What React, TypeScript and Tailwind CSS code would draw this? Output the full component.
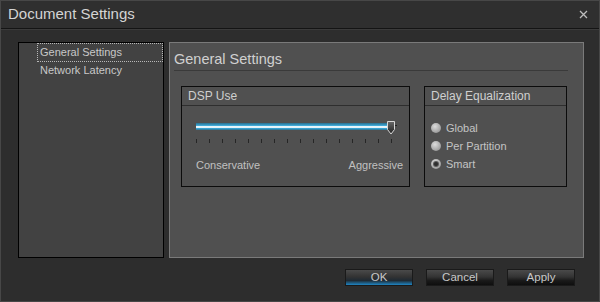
const font = { fontFamily: '"Liberation Sans", Arial, sans-serif' };

function Radio({ label, checked }: { label: string; checked?: boolean }) {
  return (
    <div className="flex h-[18px] items-center gap-[5px]">
      <span className="flex size-[10px] items-center justify-center rounded-full bg-[radial-gradient(circle_at_40%_35%,#dcdcdc,#a8a8a8_60%,#808080)]">
        {checked && <span className="size-[4px] rounded-full bg-[#2e2e2e] ring-1 ring-[#5a5a5a]" />}
      </span>
      <span className="text-[11px] leading-none text-[#c4c4c4]">{label}</span>
    </div>
  );
}

function GroupBox({ title, className, children }: { title: string; className: string; children: React.ReactNode }) {
  return (
    <div className={"flex flex-col border border-[#0c0c0c] " + className}>
      <div className="flex h-[19px] items-center border-b border-[#2e2e2e] pl-[6px] text-[12px] text-[#cfcfcf]">{title}</div>
      {children}
    </div>
  );
}

export default function App() {
  const ticks = Array.from({ length: 16 });
  return (
    <div className="flex h-[302px] w-[600px] flex-col border border-[#474747] bg-[#2d2d2d]" style={font}>
      <div className="flex h-[28px] shrink-0 items-center justify-between border-b border-[#141414] bg-[#2f2f2f] pl-[7px] pr-[11px]">
        <span className="text-[15px] text-[#d4d4d4]">Document Settings</span>
        <svg width="9" height="9" viewBox="0 0 9 9">
          <path d="M1 1L8 8M8 1L1 8" stroke="#bdbdbd" strokeWidth="1.3" />
        </svg>
      </div>
      <div className="flex flex-1 flex-col border-t border-[#3b3b3b] pt-[12px]">
        <div className="flex h-[216px] gap-[5px] pl-[17px]">
          <div className="flex w-[146px] flex-col border border-black bg-[#424242]">
            <div className="ml-[18px] flex h-[19px] items-center border border-dotted border-[#b8b8b8] pl-[2px] text-[11px] text-[#c8c8c8]">
              General Settings
            </div>
            <div className="ml-[19px] flex h-[17px] items-center pl-[2px] text-[11px] text-[#c8c8c8]">Network Latency</div>
          </div>
          <div className="flex w-[415px] flex-col border border-[#7a7a7a] bg-[#505050]">
            <div className="ml-[4px] mr-[15px] flex h-[28px] items-end border-b border-[#3a3a3a] pb-[2px] text-[14.5px] leading-[18px] text-[#d0d0d0]">
              General Settings
            </div>
            <div className="ml-[11px] mt-[15px] flex gap-[14px]">
              <GroupBox title="DSP Use" className="h-[101px] w-[229px]">
                <div className="flex flex-col pl-[14px] pr-[6px] pt-[15px]">
                  <div className="relative h-[13px] w-[199px]">
                    <div className="absolute left-0 top-[2px] h-[7px] w-[194px] bg-[linear-gradient(to_bottom,#2b6f8d,#3aa4d2_35%,#e8f6fc_50%,#ffffff_62%,#3aa4d2_78%,#2b6f8d)]" />
                    <svg className="absolute left-[191px] top-0" width="12" height="14" viewBox="0 0 12 14">
                      <defs>
                        <linearGradient id="th" x1="0" y1="0" x2="0" y2="1">
                          <stop offset="0" stopColor="#6a6a6a" />
                          <stop offset="1" stopColor="#1e1e1e" />
                        </linearGradient>
                      </defs>
                      <path d="M0.5 0.5H7.5V8.5L4 13L0.5 8.5Z" fill="url(#th)" stroke="#d8d8d8" strokeWidth="1" />
                      <path d="M8 4.5H10" stroke="#222" strokeWidth="1" />
                    </svg>
                  </div>
                  <div className="mt-[5px] flex h-[4px] w-[196px] justify-between">
                    {ticks.map((_, i) => (
                      <span key={i} className="h-[4px] w-px bg-[#262626]" />
                    ))}
                  </div>
                  <div className="mt-[15px] flex justify-between text-[11px] leading-[14px] text-[#c0c0c0]">
                    <span>Conservative</span>
                    <span>Aggressive</span>
                  </div>
                </div>
              </GroupBox>
              <GroupBox title="Delay Equalization" className="h-[101px] w-[143px]">
                <div className="flex flex-col pl-[6px] pt-[13px]">
                  <Radio label="Global" />
                  <Radio label="Per Partition" />
                  <Radio label="Smart" checked />
                </div>
              </GroupBox>
            </div>
          </div>
        </div>
        <div className="mt-[11px] flex justify-end gap-[13px] pr-[24px]">
          {["OK", "Cancel", "Apply"].map((b) => (
            <button
              key={b}
              className={
                "flex h-[17px] w-[68px] items-center justify-center border border-[#1a1a1a] text-[11.5px] text-[#c8c8c8] " +
                (b === "OK"
                  ? "bg-[linear-gradient(to_bottom,#4a4a4a,#333_45%,#1f2a33_70%,#1f86c4)]"
                  : "bg-[linear-gradient(to_bottom,#4a4a4a,#343434_45%,#1a1a1a_70%,#0e0e0e)]")
              }
            >
              {b}
            </button>
          ))}
        </div>
      </div>
    </div>
  );
}
